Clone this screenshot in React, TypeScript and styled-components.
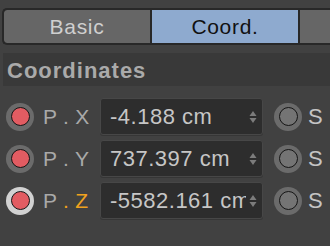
import styled, { createGlobalStyle } from "styled-components";

const GlobalStyle = createGlobalStyle`
  html, body {
    margin: 0;
    padding: 0;
    background: #414141;
    overflow: hidden;
  }
  body {
    font-family: "Liberation Sans", Arial, sans-serif;
  }
`;

interface CoordRow {
  axis: string;
  value: string;
  active?: boolean;
}

const rows: CoordRow[] = [
  { axis: "X", value: "-4.188 cm" },
  { axis: "Y", value: "737.397 cm" },
  { axis: "Z", value: "-5582.161 cm", active: true },
];

export default function App() {
  return (
    <>
      <GlobalStyle />
      <Panel>
        <TabBar>
          <Tab $width={146}>Basic</Tab>
          <Tab $width={146} $selected>
            Coord.
          </Tab>
          <Tab $width={40} />
        </TabBar>

        <SectionHeader>Coordinates</SectionHeader>

        <Rows>
          {rows.map((row) => (
            <Row key={row.axis}>
              <Radio $ring={row.active ? "#d2d2d2" : "#6b6b6b"}>
                <RadioDot $fill="#e25c62" />
              </Radio>
              <Label>
                P <Accent $active={row.active}>.</Accent>{" "}
                <Accent $active={row.active}>{row.axis}</Accent>
              </Label>
              <Field>
                <FieldText>{row.value}</FieldText>
                <Stepper>
                  <svg width="8" height="14" viewBox="0 0 8 14">
                    <path d="M4 1 L7.5 6 L0.5 6 Z" fill="#7c7c7c" />
                    <path d="M4 13 L7.5 8 L0.5 8 Z" fill="#7c7c7c" />
                  </svg>
                </Stepper>
              </Field>
              <SideRadio $ring="#6b6b6b">
                <RadioDot $fill="#747474" />
              </SideRadio>
              <SideLabel>S</SideLabel>
            </Row>
          ))}
        </Rows>
      </Panel>
    </>
  );
}

const Panel = styled.div`
  width: 330px;
  height: 246px;
  overflow: hidden;
  background: #414141;
`;

const TabBar = styled.div`
  display: flex;
  gap: 2px;
  margin: 8px 0 0 2px;
  width: 360px;
  height: 33px;
  background: #282828;
  border: 2px solid #282828;
  border-right: none;
  border-radius: 5px 0 0 5px;
  overflow: hidden;
`;

const Tab = styled.div<{ $width: number; $selected?: boolean }>`
  flex: 0 0 ${(props) => props.$width}px;
  display: flex;
  align-items: center;
  justify-content: center;
  background: ${(props) => (props.$selected ? "#8eaacf" : "#666666")};
  color: ${(props) => (props.$selected ? "#111111" : "#cfcfcf")};
  font-size: 21px;
  letter-spacing: 0.7px;
  padding-top: 1px;

  &:first-child {
    border-radius: 3px 0 0 3px;
  }
`;

const SectionHeader = styled.div`
  margin: 8px 0 0 3px;
  height: 33px;
  line-height: 35px;
  padding-left: 4px;
  background: #393939;
  color: #aaaaaa;
  font-size: 22px;
  font-weight: bold;
  letter-spacing: 1px;
`;

const Rows = styled.div`
  display: flex;
  flex-direction: column;
  gap: 5px;
  padding-top: 12px;
`;

const Row = styled.div`
  display: flex;
  align-items: center;
  height: 37px;
`;

const Radio = styled.div<{ $ring: string }>`
  flex: 0 0 auto;
  width: 28px;
  height: 28px;
  margin-left: 6px;
  border-radius: 50%;
  background: ${(props) => props.$ring};
  display: flex;
  align-items: center;
  justify-content: center;
`;

const SideRadio = styled(Radio)`
  margin-left: 11px;
`;

const RadioDot = styled.div<{ $fill: string }>`
  width: 17px;
  height: 17px;
  border-radius: 50%;
  background: ${(props) => props.$fill};
  border: 1.5px solid #151515;
`;

const Label = styled.div`
  flex: 0 0 57px;
  margin-left: 9px;
  color: #a9a9a9;
  font-size: 21px;
  letter-spacing: 0.3px;
  white-space: pre;
`;

const Accent = styled.span<{ $active?: boolean }>`
  color: ${(props) => (props.$active ? "#f0a21e" : "#a9a9a9")};
`;

const Field = styled.div`
  flex: 0 0 auto;
  width: 163px;
  box-sizing: border-box;
  height: 37px;
  display: flex;
  align-items: center;
  background: #2d2d2d;
  border: 1px solid #474747;
  border-radius: 3px;
  box-shadow: 0 1px 0 #363636;
  padding-left: 9px;
`;

const FieldText = styled.div`
  flex: 1;
  min-width: 0;
  overflow: hidden;
  white-space: nowrap;
  color: #c6c6c6;
  font-size: 22px;
  letter-spacing: 0.5px;
  padding-top: 1px;
`;

const Stepper = styled.div`
  flex: 0 0 auto;
  display: flex;
  align-items: center;
  padding: 0 5px 0 3px;
`;

const SideLabel = styled.div`
  margin-left: 6px;
  color: #c4c4c4;
  font-size: 22px;
`;
